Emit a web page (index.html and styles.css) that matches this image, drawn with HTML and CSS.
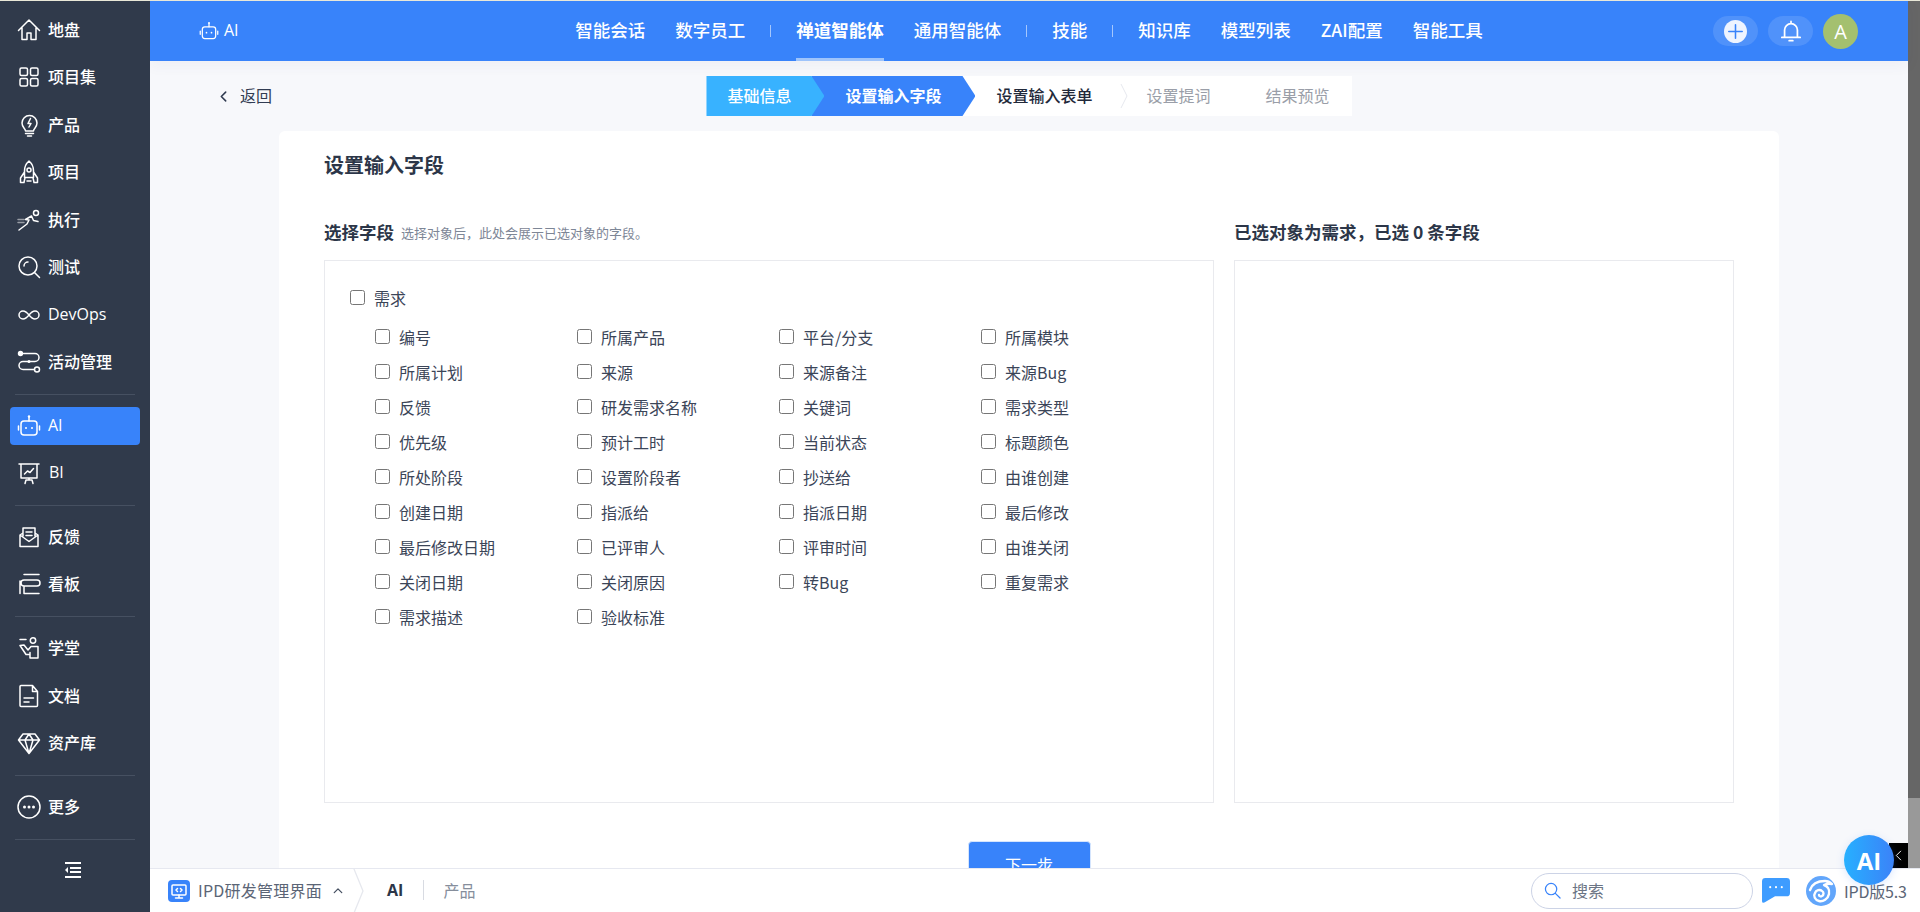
FILE: index.html
```html
<!DOCTYPE html>
<html lang="zh-CN">
<head>
<meta charset="utf-8">
<title>设置输入字段</title>
<link rel="stylesheet" href="styles.css">
</head>
<body>
<div class="topline"></div>
<div class="app">
  <aside class="sidebar">
    <a class="side-item"><svg class="side-icon" viewBox="0 0 24 24"><path d="M1.500 12.500 12 2l10.500 10.500M5 10v11.500h5V15h4v6.500h5V10"/></svg><span>地盘</span></a>
    <a class="side-item"><svg class="side-icon" viewBox="0 0 24 24"><rect x="3" y="3" width="7.500" height="7.500" rx="1.500"/><rect x="13.500" y="3" width="7.500" height="7.500" rx="1.500"/><rect x="3" y="13.500" width="7.500" height="7.500" rx="1.500"/><rect x="13.500" y="13.500" width="7.500" height="7.500" rx="1.500"/></svg><span>项目集</span></a>
    <a class="side-item"><svg class="side-icon" viewBox="0 0 24 24"><path d="M8.500 18c0-2.500-3.500-3.500-3.500-8a7.500 7.500 0 0 1 15 0c0 4.500-3.500 5.500-3.500 8zM8.500 20.500h8M10.500 23h4"/><path d="M13.500 5.500 11 10.500h3l-2 3.500"/></svg><span>产品</span></a>
    <a class="side-item"><svg class="side-icon" viewBox="0 0 24 24"><path d="M12 1c3 2.500 4.500 6 4.500 10v6.500h-9V11c0-4 1.500-7.500 4.500-10zM7.500 12 3.500 18v4.500h3.500l1-5M16.500 12l4 6v4.500H17l-1-5M10 21h4"/><circle cx="12" cy="10" r="2"/></svg><span>项目</span></a>
    <a class="side-item"><svg class="side-icon" viewBox="0 0 24 24"><circle cx="19" cy="5" r="2.500"/><path d="m2 22 8-6 2-4-3.500-.5 6-3.500 2 4.500 4.500 1"/><path class="side-faint" d="M1 11.500h6M1 14.500h6"/></svg><span>执行</span></a>
    <a class="side-item"><svg class="side-icon" viewBox="0 0 24 24"><circle cx="11" cy="11" r="9"/><path d="m17.500 17.500 5 5M7 11a4 4 0 0 1 4-4"/></svg><span>测试</span></a>
    <a class="side-item"><svg class="side-icon" viewBox="0 0 24 24"><path d="M12 12c-2-2.500-3.500-4-6-4a4 4 0 0 0 0 8c2.500 0 4-1.500 6-4s3.500-4 6-4a4 4 0 0 1 0 8c-2.500 0-4-1.500-6-4z"/></svg><span class="latin">DevOps</span></a>
    <a class="side-item"><svg class="side-icon" viewBox="0 0 24 24"><circle class="side-solid" cx="3.500" cy="3.500" r="2.700"/><path d="M6.500 3.500H18a4 4 0 0 1 0 8H6a4 4 0 0 0 0 8h11"/><circle cx="20" cy="19.500" r="2.500"/><circle class="side-solid" cx="12" cy="11.500" r="1.500"/></svg><span>活动管理</span></a>
    <div class="side-divider"></div>
    <a class="side-item side-active"><svg class="side-icon" viewBox="0 0 24 24"><rect x="4" y="7" width="16" height="14" rx="3"/><path d="M12 7V3M1.500 12v4M22.500 12v4"/><circle class="side-solid" cx="12" cy="2.500" r="1.200"/><circle class="side-solid" cx="9" cy="14" r="1"/><circle class="side-solid" cx="15" cy="14" r="1"/></svg><span class="latin">AI</span></a>
    <a class="side-item"><svg class="side-icon" viewBox="0 0 24 24"><path d="M2 3h20M4 3v14h16V3M12 17v2M8 22.500l1-3.500h6l1 3.500M7.500 13l3-3 2.500 1.500 3.500-4"/></svg><span class="latin side-bi">BI</span></a>
    <div class="side-divider"></div>
    <a class="side-item"><svg class="side-icon" viewBox="0 0 24 24"><path d="M6 11V3h12v8M6 8l-3 2M18 8l3 2M3 10v11.500h18V10l-9 6.500zM9 7h6M9 10.500h6"/></svg><span>反馈</span></a>
    <a class="side-item"><svg class="side-icon" viewBox="0 0 24 24"><path d="M7 2.500h15M3 9v12.500M7 8h13a2.500 2.500 0 0 1 0 6H7a2.500 2.500 0 0 1 0-6zM7 21.500h15M7 14v7.500"/></svg><span>看板</span></a>
    <div class="side-divider"></div>
    <a class="side-item"><svg class="side-icon" viewBox="0 0 24 24"><circle cx="16" cy="4.500" r="2.700"/><path d="M3 3.500h6M3 9.500l6 9h4v3.500h8V10.500h-7l-3 3.500-4-5zM13 18.500v-2"/></svg><span>学堂</span></a>
    <a class="side-item"><svg class="side-icon" viewBox="0 0 24 24"><path d="M4 1.500h11.500l5 6V21.500a1 1 0 0 1-1 1H4a1 1 0 0 1-1-1v-19a1 1 0 0 1 1-1zM15.500 1.500v6h5M7 14h9.500M7 18h5"/></svg><span>文档</span></a>
    <a class="side-item"><svg class="side-icon" viewBox="0 0 24 24"><path d="M6 3h12l4.500 6L12 22.500 1.500 9zM1.500 9h21M8 9l4 13.500L16 9M8 9l4-6 4 6"/></svg><span>资产库</span></a>
    <div class="side-divider"></div>
    <a class="side-item"><svg class="side-icon" viewBox="0 0 24 24"><circle cx="12" cy="12" r="11"/><circle class="side-solid" cx="7.500" cy="12" r="1.500"/><circle class="side-solid" cx="12" cy="12" r="1.500"/><circle class="side-solid" cx="16.500" cy="12" r="1.500"/></svg><span>更多</span></a>
    <div class="side-divider"></div>
    <div class="side-collapse"><svg class="collapse-icon" viewBox="0 0 16 16"><path d="M0 1h16M5 6h11M5 10h11M0 15h16"/><path class="side-solid" d="M3 5v6L0 8z"/></svg></div>
  </aside>

  <div class="main">
    <div class="scroll-region">
      <header class="topbar">
        <div class="brand">
          <svg class="brand-icon" viewBox="0 0 24 24"><rect x="4" y="7" width="16" height="14" rx="3"/><path d="M12 7V3M1.500 12v4M22.500 12v4"/><circle class="side-solid" cx="12" cy="2.500" r="1.200"/><circle class="side-solid" cx="9" cy="14" r="1"/><circle class="side-solid" cx="15" cy="14" r="1"/></svg>
          <span class="latin">AI</span>
        </div>
        <nav class="topnav">
          <a class="nav-link">智能会话</a>
          <a class="nav-link">数字员工</a>
          <i class="nav-sep"></i>
          <a class="nav-link nav-active">禅道智能体</a>
          <a class="nav-link">通用智能体</a>
          <i class="nav-sep"></i>
          <a class="nav-link">技能</a>
          <i class="nav-sep"></i>
          <a class="nav-link">知识库</a>
          <a class="nav-link">模型列表</a>
          <a class="nav-link">ZAI配置</a>
          <a class="nav-link">智能工具</a>
        </nav>
        <div class="top-actions">
          <button class="pill"><svg class="plus-icon" viewBox="0 0 24 24"><circle cx="12" cy="12" r="12"/><path d="M12 5v14M5 12h14"/></svg></button>
          <button class="pill"><svg class="bell-icon" viewBox="0 0 24 24"><path d="M12 1.500v2M5 19V11a7 7 0 0 1 14 0v8M2 19h20M10 22.500h4"/></svg></button>
          <div class="avatar">A</div>
        </div>
      </header>

      <div class="content">
        <div class="step-row">
          <a class="back"><svg class="back-icon" viewBox="0 0 8 12"><path d="M6.500 1 1.500 6l5 5"/></svg><span>返回</span></a>
          <div class="steps">
            <div class="step step-first">基础信息</div>
            <div class="step step-current">设置输入字段</div>
            <div class="step step-next">设置输入表单<svg class="step-chevron" viewBox="0 0 8 24"><path d="M1 0l6 12-6 12"/></svg></div>
            <div class="step step-todo">设置提词</div>
            <div class="step step-last">结果预览</div>
          </div>
        </div>

        <section class="card">
          <h2 class="card-title">设置输入字段</h2>
          <div class="columns">
            <div class="col-left">
              <div class="col-head"><b>选择字段</b><small>选择对象后，此处会展示已选对象的字段。</small></div>
              <div class="field-box">
                <label class="root-check"><input type="checkbox"><span>需求</span></label>
                <div class="field-grid">
                  <label class="check"><input type="checkbox"><span>编号</span></label>
                  <label class="check"><input type="checkbox"><span>所属产品</span></label>
                  <label class="check"><input type="checkbox"><span>平台/分支</span></label>
                  <label class="check"><input type="checkbox"><span>所属模块</span></label>
                  <label class="check"><input type="checkbox"><span>所属计划</span></label>
                  <label class="check"><input type="checkbox"><span>来源</span></label>
                  <label class="check"><input type="checkbox"><span>来源备注</span></label>
                  <label class="check"><input type="checkbox"><span>来源Bug</span></label>
                  <label class="check"><input type="checkbox"><span>反馈</span></label>
                  <label class="check"><input type="checkbox"><span>研发需求名称</span></label>
                  <label class="check"><input type="checkbox"><span>关键词</span></label>
                  <label class="check"><input type="checkbox"><span>需求类型</span></label>
                  <label class="check"><input type="checkbox"><span>优先级</span></label>
                  <label class="check"><input type="checkbox"><span>预计工时</span></label>
                  <label class="check"><input type="checkbox"><span>当前状态</span></label>
                  <label class="check"><input type="checkbox"><span>标题颜色</span></label>
                  <label class="check"><input type="checkbox"><span>所处阶段</span></label>
                  <label class="check"><input type="checkbox"><span>设置阶段者</span></label>
                  <label class="check"><input type="checkbox"><span>抄送给</span></label>
                  <label class="check"><input type="checkbox"><span>由谁创建</span></label>
                  <label class="check"><input type="checkbox"><span>创建日期</span></label>
                  <label class="check"><input type="checkbox"><span>指派给</span></label>
                  <label class="check"><input type="checkbox"><span>指派日期</span></label>
                  <label class="check"><input type="checkbox"><span>最后修改</span></label>
                  <label class="check"><input type="checkbox"><span>最后修改日期</span></label>
                  <label class="check"><input type="checkbox"><span>已评审人</span></label>
                  <label class="check"><input type="checkbox"><span>评审时间</span></label>
                  <label class="check"><input type="checkbox"><span>由谁关闭</span></label>
                  <label class="check"><input type="checkbox"><span>关闭日期</span></label>
                  <label class="check"><input type="checkbox"><span>关闭原因</span></label>
                  <label class="check"><input type="checkbox"><span>转Bug</span></label>
                  <label class="check"><input type="checkbox"><span>重复需求</span></label>
                  <label class="check"><input type="checkbox"><span>需求描述</span></label>
                  <label class="check"><input type="checkbox"><span>验收标准</span></label>
                </div>
              </div>
            </div>
            <div class="col-right">
              <div class="col-head"><b>已选对象为需求，已选 0 条字段</b></div>
              <div class="field-box"></div>
            </div>
          </div>
          <div class="card-actions"><button class="next-btn">下一步</button></div>
        </section>
      </div>
      <div class="scrollbar"><div class="scroll-thumb"></div></div>
    </div>

    <footer class="bottombar">
      <div class="app-switch">
        <span class="app-logo"><svg viewBox="0 0 22 22"><rect x="4" y="5" width="14" height="10" rx="1"/><path d="M11 15v3M7.500 18h7M9.500 8.500 8 10l1.500 1.500M12.500 8.500 14 10l-1.500 1.500"/></svg></span>
        <span class="app-name">IPD研发管理界面</span>
        <svg class="up-icon" viewBox="0 0 12 8"><path d="m1.500 6.500 4.500-4.500 4.500 4.500"/></svg>
      </div>
      <svg class="crumb-chevron" viewBox="0 0 12 44"><path d="M1 0l9 22-9 22"/></svg>
      <div class="crumbs"><b class="latin">AI</b><i class="crumb-sep"></i><span>产品</span></div>
      <div class="bottom-right">
        <div class="search"><svg class="search-icon" viewBox="0 0 18 18"><circle cx="7.500" cy="7.500" r="6"/><path d="m12 12 5 5"/></svg><span>搜索</span></div>
        <svg class="chat-icon" viewBox="0 0 30 28"><path d="M4 1h22a3.500 3.500 0 0 1 3.500 3.500v12a3.500 3.500 0 0 1-3.500 3.500H14L3 26.500c-2 .5-2.500-.5-2.500-2V4.500A3.500 3.500 0 0 1 4 1z"/><circle cx="9" cy="10.500" r="1.100"/><circle cx="15" cy="10.500" r="1.100"/><circle cx="21" cy="10.500" r="1.100"/></svg>
        <svg class="logo-icon" viewBox="0 0 30 30"><circle cx="15" cy="15" r="15"/><path d="M4 14C6 8 12 5 19 5c3 0 5 1 7 3-3-.5-6 0-8 1 3 1 6 4 5 9-1 5-6 8-10 7-4-1-6-5-4-8 1-3 5-4 7-2 2 1 2 4 0 5-1 1-3 0-3-1"/></svg>
        <span class="version">IPD版5.3</span>
      </div>
    </footer>

    <div class="float-tab"><svg viewBox="0 0 8 12"><path d="M6.500 1 1.500 6l5 5"/></svg></div>
    <div class="float-ai">AI</div>
  </div>
</div>
</body>
</html>
```

FILE: styles.css
```css
* { box-sizing: border-box; }
html, body { margin: 0; height: 100%; overflow: hidden; }
body {
  font-family: "Noto Sans CJK SC", "Noto Sans", sans-serif;
  font-size: 16px;
  color: #313c52;
  background: #f7f8fb;
  display: flex;
  flex-direction: column;
}
svg { display: block; fill: none; stroke: currentColor; stroke-linecap: round; stroke-linejoin: round; }
a { color: inherit; text-decoration: none; }
.latin { font-family: "Open Sans", "Noto Sans CJK SC", sans-serif; }

.topline { height: 1px; background: #e9e8d8; flex: none; }
.app { flex: 1; display: flex; min-height: 0; }

/* sidebar */
.sidebar {
  width: 150px;
  flex: none;
  background: #303a4b;
  color: #fff;
  padding: 5px 10px 0;
  display: flex;
  flex-direction: column;
}
.side-item {
  height: 47.500px;
  flex: none;
  display: flex;
  align-items: center;
  gap: 7px;
  padding-left: 7px;
  border-radius: 4px;
  line-height: 1;
  font-weight: 500;
}
.side-item span { margin-bottom: 2px; }
.side-icon { width: 24px; height: 24px; stroke-width: 1.500; flex: none; }
.side-solid { fill: currentColor; stroke: none; }
.side-faint { opacity: .5; }
.side-bi { margin-left: 1px; }
.side-active { background: #3883fa; height: 38px; margin: 4.500px 0 4px; }
.side-divider { height: 1px; background: #465061; margin: 8px 5px 7.500px; flex: none; }
.side-collapse { height: 60px; display: flex; align-items: center; justify-content: center; padding-bottom: 16px; }
.collapse-icon { width: 16px; height: 16px; stroke-width: 2; stroke-linecap: butt; margin-right: 4px; }

/* main */
.main { flex: 1; min-width: 0; display: flex; flex-direction: column; position: relative; }
.scroll-region { flex: 1; min-height: 0; display: grid; grid-template-columns: 1fr 12px; grid-template-rows: 60px 1fr; overflow: hidden; }
.topbar {
  grid-column: 1;
  background: #3883fa;
  color: #fff;
  display: grid;
  grid-template-columns: 1fr auto 1fr;
  align-items: center;
  box-shadow: 0 4px 14px rgba(40, 60, 110, .05);
  z-index: 1;
}
.brand { display: flex; align-items: center; gap: 5px; padding-left: 49px; }
.brand span { margin-bottom: 2px; }
.brand-icon { width: 20px; height: 20px; stroke-width: 1.500; }
.topnav { display: flex; align-items: stretch; height: 60px; }
.nav-link { font-size: 17.500px; font-weight: 500; display: flex; align-items: center; position: relative; color: #fff; line-height: 1; white-space: nowrap; padding-bottom: 2px; }
.nav-link + .nav-link { margin-left: 30px; }
.nav-active { font-weight: 700; }
.nav-active::after { content: ""; position: absolute; left: 0; right: 0; bottom: 0; height: 3px; background: #9ec4fb; }
.nav-sep { width: 1px; height: 12px; background: rgba(255, 255, 255, .55); align-self: center; margin: 0 25px; }
.top-actions { display: flex; justify-content: flex-end; align-items: center; gap: 10px; padding-right: 50px; }
.pill { width: 45px; height: 30px; border: 0; border-radius: 15px; background: rgba(255, 255, 255, .12); color: #fff; padding: 0; display: flex; align-items: center; justify-content: center; }
.plus-icon { width: 23px; height: 23px; }
.plus-icon circle { fill: #eef4ff; stroke: none; }
.plus-icon path { stroke: #3883fa; stroke-width: 1.600; }
.bell-icon { width: 22px; height: 22px; stroke-width: 1.900; }
.avatar { width: 35px; height: 35px; border-radius: 50%; background: #a4c06f; color: #fff; font-size: 20px; display: flex; align-items: center; justify-content: center; font-family: "Open Sans", sans-serif; }

.content { grid-column: 1; min-height: 0; overflow: hidden; padding-top: 15px; }
.step-row { height: 40px; position: relative; display: flex; justify-content: center; }
.back { position: absolute; left: 70px; top: 0; height: 40px; display: flex; align-items: center; gap: 13px; line-height: 1; color: #313c52; }
.back span { margin-bottom: 2px; }
.back-icon { width: 7px; height: 11px; stroke-width: 1.800; }
.steps { display: flex; background: #fff; height: 40px; }
.step { display: flex; align-items: center; line-height: 1; white-space: nowrap; position: relative; font-size: 16px; padding-bottom: 2px; }
.step-first { background: #38b2ff; color: #fff; padding-left: 21px; padding-right: 33px; z-index: 2; font-weight: 500; clip-path: polygon(0 0, calc(100% - 13px) 0, 100% 50%, calc(100% - 13px) 100%, 0 100%); }
.step-current { background: #3883fa; color: #fff; font-weight: 700; padding-left: 34px; padding-right: 34px; margin-left: -13px; z-index: 1; clip-path: polygon(0 0, calc(100% - 13px) 0, 100% 50%, calc(100% - 13px) 100%, 0 100%); }
.step-next { color: #22293a; padding-left: 21px; padding-right: 35px; font-weight: 500; }
.step-chevron { position: absolute; right: 0; top: 8px; width: 8px; height: 24px; color: #e6e8ee; stroke-width: 1; }
.step-todo { color: #9a9ea8; padding-left: 19px; padding-right: 55px; }
.step-last { color: #9a9ea8; padding-right: 22px; }

.card { width: 1500px; margin: 15px 0 0 129px; background: #fff; border-radius: 6px 6px 0 0; padding: 0 45px; height: 900px; }
.card-title { margin: 0; height: 68px; display: flex; align-items: center; font-size: 20px; font-weight: 700; line-height: 1; color: #2c3648; }
.columns { display: grid; grid-template-columns: 890px 500px; column-gap: 20px; }
.col-head { height: 61px; display: flex; align-items: center; padding-top: 5px; gap: 7px; line-height: 1; }
.col-head b { font-size: 17.500px; font-weight: 700; color: #2c3648; }
.col-head small { font-size: 13px; color: #7d8696; }
.field-box { height: 543px; border: 1px solid #e9eaee; padding: 19px 25px; }
.root-check, .check { display: flex; align-items: center; gap: 9px; line-height: 1; color: #3b4558; }
.root-check { height: 35px; }
.root-check input, .check input { width: 15px; height: 15px; margin: 0; flex: none; }
.field-grid { display: grid; grid-template-columns: repeat(4, 202px); grid-auto-rows: 35px; padding-left: 25px; margin-top: 4px; }
.card-actions { display: flex; justify-content: center; padding-top: 38px; }
.next-btn { width: 123px; height: 46px; border: 1px solid #d5e5fd; border-radius: 4px; background: #3883fa; color: #fff; font: 16px "Noto Sans CJK SC", sans-serif; }

.scrollbar { grid-column: 2; grid-row: 1 / span 2; background: #999; display: flex; align-items: flex-start; }
.scroll-thumb { flex: 1; height: 797px; background: #666; }

/* bottom */
.bottombar { height: 44px; flex: none; background: #fff; border-top: 1px solid #e6e8f0; display: flex; align-items: center; padding-left: 18px; color: #5b6576; z-index: 2; }
.app-switch { display: flex; align-items: center; gap: 8px; line-height: 1; }
.app-name { letter-spacing: .25px; margin-bottom: 2px; }
.app-logo { width: 22px; height: 22px; border-radius: 4px; background: #3883fa; color: #fff; }
.app-logo svg { width: 22px; height: 22px; stroke-width: 1.500; }
.up-icon { width: 10px; height: 7px; stroke-width: 1.500; margin-left: 3px; color: #444e60; }
.crumb-chevron { width: 12px; height: 44px; margin-left: 10px; color: #e6e8ee; stroke-width: 1.300; }
.crumbs { display: flex; align-items: center; margin-left: 22px; line-height: 1; padding-bottom: 2px; }
.crumbs b { font-weight: 700; color: #2c3648; }
.crumb-sep { width: 1px; height: 20px; background: #d8dbe2; margin: 0 19px 0 20px; }
.crumbs span { color: #868e9c; }
.bottom-right { margin-left: auto; display: flex; align-items: center; }
.search { width: 222px; height: 36px; border: 1px solid #ccd3e6; border-radius: 18px; display: flex; align-items: center; gap: 11px; padding-left: 12px; color: #6b7484; line-height: 1; }
.search span { margin-bottom: 2px; }
.search-icon { width: 17px; height: 17px; color: #3883fa; stroke-width: 1.300; }
.chat-icon { width: 30px; height: 27px; margin-left: 8px; fill: #3e9cff; stroke: none; }
.chat-icon circle { fill: #fff; }
.logo-icon { width: 30px; height: 30px; margin-left: 15px; }
.logo-icon circle { fill: #62a6fb; stroke: none; }
.logo-icon path { stroke: #fff; stroke-width: 2.400; }
.version { margin-left: 8px; width: 76px; white-space: nowrap; color: #5b6576; line-height: 1; letter-spacing: -.2px; }

.float-tab { position: absolute; right: 12px; bottom: 44px; width: 19px; height: 25px; background: #000; color: #fff; display: flex; align-items: center; justify-content: center; }
.float-tab svg { width: 7px; height: 11px; stroke-width: 1.100; }
.float-ai { position: absolute; right: 26px; bottom: 27px; width: 50px; height: 50px; border-radius: 50%; background: linear-gradient(90deg, #27b0ff, #3b82f8); color: #fff; font: 700 24px "Open Sans", sans-serif; display: flex; align-items: center; justify-content: center; box-shadow: 0 2px 8px rgba(60, 130, 250, .18); z-index: 3; }
```
